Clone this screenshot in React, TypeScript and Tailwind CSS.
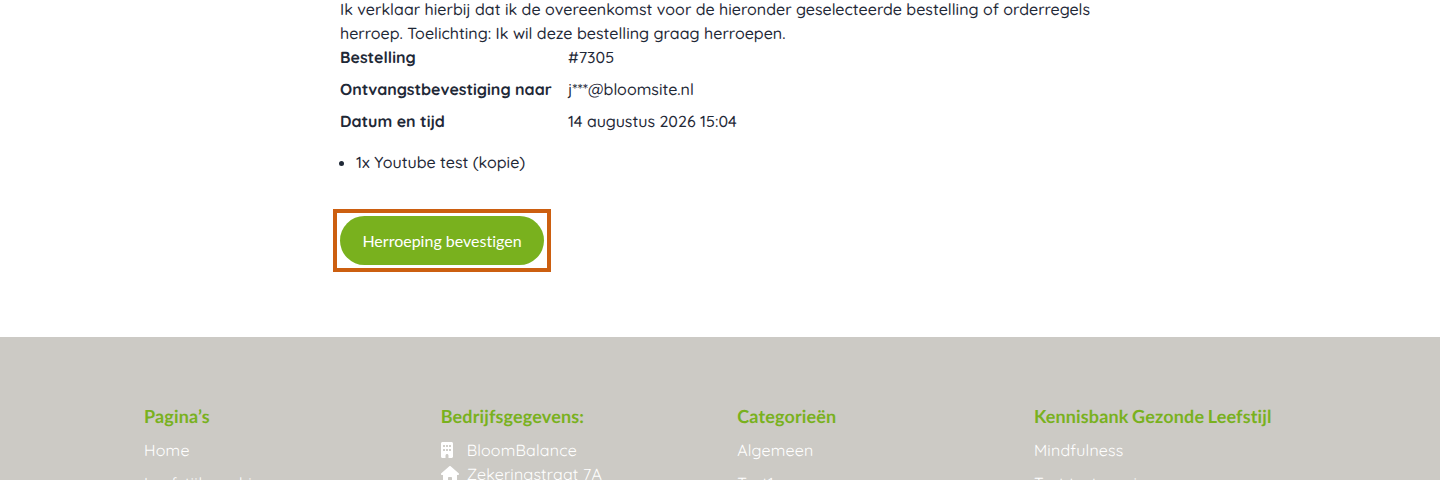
import { FaBuilding, FaHouse } from "react-icons/fa6";

const body = "font-['Quicksand','Open_Sans','Noto_Sans',sans-serif] [text-rendering:geometricPrecision] [font-variant-ligatures:none]";
const heading = "font-['Lato',sans-serif] font-bold text-[18px] leading-[24px] text-[#79b11e] mb-[10px] tracking-[0.15px] [word-spacing:-1px]";

function FooterCol({ title, items }: { title: string; items: string[] }) {
  return (
    <div>
      <h3 className={heading}>{title}</h3>
      <ul className="text-[16px] leading-[25px] text-white tracking-[0.2px]">
        {items.map((t) => (
          <li key={t} className="mb-[8px]">{t}</li>
        ))}
      </ul>
    </div>
  );
}

export default function App() {
  return (
    <div className={`h-[480px] overflow-hidden bg-white ${body}`}>
      <main className="ml-[340px] w-[760px] h-[340px] -mt-[3px] text-[16px] leading-[24px] text-[#1f2937] font-medium">
        <p>
          Ik verklaar hierbij dat ik de overeenkomst voor de hieronder geselecteerde bestelling of orderregels herroep. Toelichting: Ik wil deze bestelling graag herroepen.
        </p>
        <table className="border-collapse">
          <tbody>
            <tr>
              <th className="text-left font-bold w-[228px] align-top pb-2">Bestelling</th>
              <td className="align-top pb-2">#7305</td>
            </tr>
            <tr>
              <th className="text-left font-bold align-top pb-2">Ontvangstbevestiging naar</th>
              <td className="align-top pb-2">j***@bloomsite.nl</td>
            </tr>
            <tr>
              <th className="text-left font-bold align-top pb-2">Datum en tijd</th>
              <td className="align-top pb-2">14 augustus 2026 15:04</td>
            </tr>
          </tbody>
        </table>
        <ul className="list-disc pl-4 mt-[9px]">
          <li>1x Youtube test (kopie)</li>
        </ul>
        <div className="w-fit mt-[35px] -ml-[7px] border-4 border-[#cc5f10] p-[3px]">
          <button className="block w-[204px] h-[49px] rounded-full bg-[#79b11e] text-white font-['Lato',sans-serif] font-normal text-[16px]">
            Herroeping bevestigen
          </button>
        </div>
      </main>
      <footer className="bg-[#cccac5] h-[143px] px-[144px] pt-[67px]">
        <div className="grid grid-cols-4 gap-x-[34.5px]">
          <FooterCol title="Pagina’s" items={["Home", "Leefstijlcoaching"]} />
          <div>
            <h3 className={heading}>Bedrijfsgegevens:</h3>
            <ul className="text-[16px] leading-[24px] text-white tracking-[0.2px]">
              <li className="flex items-center gap-[14px]">
                <FaBuilding className="w-[12px] h-[16px] shrink-0" />
                <span>BloomBalance</span>
              </li>
              <li className="flex items-center gap-[8px]">
                <FaHouse className="w-[18px] h-[16px] shrink-0" />
                <span>Zekeringstraat 7A</span>
              </li>
            </ul>
          </div>
          <FooterCol title="Categorieën" items={["Algemeen", "Test1"]} />
          <FooterCol title="Kennisbank Gezonde Leefstijl" items={["Mindfulness", "Test test versie"]} />
        </div>
      </footer>
    </div>
  );
}
